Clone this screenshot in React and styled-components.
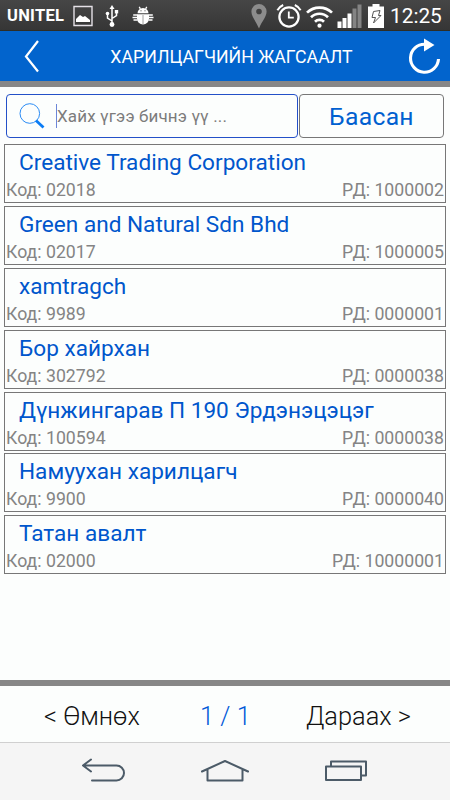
import React from 'react'
import styled, { createGlobalStyle } from 'styled-components'

const customers = [
  { name: 'Creative Trading Corporation', code: '02018', rd: '1000002' },
  { name: 'Green and Natural Sdn Bhd', code: '02017', rd: '1000005' },
  { name: 'xamtragch', code: '9989', rd: '0000001' },
  { name: 'Бор хайрхан', code: '302792', rd: '0000038' },
  { name: 'Дүнжингарав П 190 Эрдэнэцэцэг', code: '100594', rd: '0000038' },
  { name: 'Намуухан харилцагч', code: '9900', rd: '0000040' },
  { name: 'Татан авалт', code: '02000', rd: '10000001' },
]

const StatusBar = () => (
  <Status>
    <Carrier>UNITEL</Carrier>
    <Icon $w={20} $left={8} viewBox='0 0 20 22'>
      <path d='M1 1.5h18v19H1z' fill='none' stroke='#e4e0e6' strokeWidth='1.4' />
      <path d='M3 17v-3l4-4 3 2 2-1 5 4v2z' fill='#fff' />
    </Icon>
    <Icon $w={14} $left={12} viewBox='0 0 14 22'>
      <path
        d='M7 3v16M7 16l-4.5-3V9M7 13.5l4.5-3V7'
        fill='none'
        stroke='#fff'
        strokeWidth='1.5'
      />
      <path d='M7 0l2.5 4h-5z' fill='#fff' />
      <circle cx='7' cy='19.5' r='2.4' fill='#fff' />
      <circle cx='2.5' cy='8.5' r='1.8' fill='#fff' />
      <path d='M9.8 5h3.4v3.4H9.8z' fill='#fff' />
    </Icon>
    <Icon $w={22} $left={13} viewBox='0 0 22 22'>
      <path d='M5.5 8.2a5.5 5.2 0 0 1 11 0z' fill='#fff' />
      <path d='M5 9.2h12v4.3a6 6 0 0 1-12 0z' fill='#fff' />
      <path
        d='M7.2 1.8l1.2 2M14.8 1.8l-1.2 2M5.5 10H1.2M5 12.5H.5M5.5 15H1.5M16.5 10h4.3M17 12.5h4.5M16.5 15h4'
        stroke='#fff'
        strokeWidth='1.3'
      />
      <path d='M11 10v9' stroke='#888' strokeWidth='.8' />
      <path d='M8.5 5.8h1M12.5 5.8h1' stroke='#444' />
    </Icon>
    <Spacer />
    <Icon $w={16} $h={26} viewBox='0 0 16 26'>
      <path
        d='M8 1a7.6 7.6 0 0 0-7.6 7.6C.4 14 5 18 8 25.5 11 18 15.6 14 15.6 8.6A7.6 7.6 0 0 0 8 1zm0 4.7a2.8 2.8 0 1 1 0 5.6 2.8 2.8 0 0 1 0-5.6z'
        fill='#8c8c8c'
        fillRule='evenodd'
      />
    </Icon>
    <Icon $w={26} $h={26} $left={9} viewBox='0 0 26 26'>
      <circle cx='13' cy='14' r='9.6' fill='none' stroke='#fff' strokeWidth='2.3' />
      <path d='M12.8 8.5v6.2h5' fill='none' stroke='#fff' strokeWidth='1.8' />
      <path
        d='M1.4 7.2a12 12 0 0 1 5.8-5.2M24.6 7.2A12 12 0 0 0 18.8 2'
        fill='none'
        stroke='#fff'
        strokeWidth='2'
      />
    </Icon>
    <Icon $w={27} $h={26} $left={4} viewBox='0 0 27 26'>
      <path
        d='M1 9.6a18 18 0 0 1 25 0M5 14.3a12 12 0 0 1 17 0M9 18.8a6.4 6.4 0 0 1 9 0'
        fill='none'
        stroke='#fff'
        strokeWidth='2.7'
      />
      <circle cx='13.5' cy='22.7' r='2.1' fill='#fff' />
    </Icon>
    <Icon $w={25} $h={26} $left={4} viewBox='0 0 25 26'>
      <path d='M.5 18.5h4V25h-4zM5.5 15h4v10h-4zM10.5 10.5h4V25h-4z' fill='#fff' />
      <path d='M15.5 5.5h4V25h-4zM20.5 1.5h4V25h-4z' fill='#848484' />
    </Icon>
    <Icon $w={16} $h={26} $left={6} viewBox='0 0 16 26'>
      <path d='M4.5 1h7v2.5H16V25H0V3.5h4.5z' fill='#fff' />
      <path d='M5.5 8.5l6.5-1-1.5 5h2.5L5.5 20l2-5.5H4z' fill='none' stroke='#555' />
    </Icon>
    <Clock>12:25</Clock>
  </Status>
)

const Header = () => (
  <TitleBar>
    <IconButton aria-label='back'>
      <svg width='16' height='34' viewBox='0 0 16 34'>
        <path d='M14 2L2 17.5l12 15' fill='none' stroke='#fff' strokeWidth='2.2' />
      </svg>
    </IconButton>
    <h1>ХАРИЛЦАГЧИЙН ЖАГСААЛТ</h1>
    <IconButton aria-label='refresh'>
      <svg width='34' height='38' viewBox='0 0 34 38'>
        <path
          d='M17 7.2A14 14 0 1 0 30.5 22'
          fill='none'
          stroke='#fff'
          strokeWidth='3.1'
        />
        <path d='M16 1.5L26.5 8 16 14.5z' fill='#fff' />
      </svg>
    </IconButton>
  </TitleBar>
)

const Search = () => (
  <SearchRow>
    <SearchBox>
      <svg width='26' height='26' viewBox='0 0 26 26'>
        <circle cx='10.8' cy='10.5' r='9.8' fill='none' stroke='#2b8cf5' />
        <path d='M17 17.5l7.5 7' stroke='#0a7cf5' strokeWidth='2.8' />
      </svg>
      <Caret />
      <span>Хайх үгээ бичнэ үү ...</span>
    </SearchBox>
    <DayButton>Баасан</DayButton>
  </SearchRow>
)

const App = () => (
  <Screen>
    <GlobalStyle />
    <StatusBar />
    <Header />
    <Divider />
    <Search />
    <List>
      {customers.map((c) => (
        <Card key={c.name}>
          <Name>{c.name}</Name>
          <Meta>
            <span>Код: {c.code}</span>
            <span>РД: {c.rd}</span>
          </Meta>
        </Card>
      ))}
    </List>
    <Divider />
    <Pager>
      <PageLink>&lt; Өмнөх</PageLink>
      <PageLink $active>1 / 1</PageLink>
      <PageLink>Дараах &gt;</PageLink>
    </Pager>
    <NavBar>
      <svg width='46' height='26' viewBox='0 0 46 26'>
        <path d='M11 2.5L3 8.5l8 6M3.5 8.5h33a7.5 7.5 0 0 1 0 15H12' />
      </svg>
      <svg width='50' height='26' viewBox='0 0 50 26'>
        <path d='M2 14.5L25 4l23 10.5M7.5 13v10.5h35V13' />
      </svg>
      <svg width='46' height='26' viewBox='0 0 46 26'>
        <path d='M3 9.5h35v13.5H3zM8 9V4.5h35v14h-4.5' />
      </svg>
    </NavBar>
  </Screen>
)

export default App

const GlobalStyle = createGlobalStyle`
  body {
    margin: 0;
    font-family: Roboto, 'Noto Sans', sans-serif;
  }
`

const Screen = styled.div`
  display: flex;
  flex-direction: column;
  width: 450px;
  height: 800px;
  overflow: hidden;
  background: #fcfefd;
`

const Status = styled.div`
  display: flex;
  align-items: center;
  flex: none;
  height: 31px;
  box-sizing: border-box;
  padding: 0 9px 0 7px;
  color: #fff;
  background: linear-gradient(#464646, #363636 95%, #292a20);
`

const Carrier = styled.span`
  width: 58px;
  font-size: 16.5px;
  font-weight: 700;
  letter-spacing: 0.3px;
  white-space: nowrap;
`

const Icon = styled.svg`
  flex: none;
  width: ${(p) => p.$w}px;
  height: ${(p) => p.$h || 22}px;
  margin-left: ${(p) => p.$left || 0}px;
`

const Spacer = styled.div`
  flex: 1;
`

const Clock = styled.span`
  width: 51px;
  margin-left: 6px;
  font-size: 20.8px;
  line-height: 32px;
  white-space: nowrap;
`

const TitleBar = styled.header`
  display: flex;
  align-items: center;
  justify-content: space-between;
  flex: none;
  height: 50px;
  box-sizing: border-box;
  padding: 0 8px 0 24px;
  color: #fff;
  background: #0264cd;

  h1 {
    margin: 2px 0 0 15px;
    font-size: 17.7px;
    font-weight: 400;
    line-height: 24px;
  }
`

const IconButton = styled.button`
  display: flex;
  padding: 0;
  border: 0;
  background: none;
`

const Divider = styled.div`
  flex: 0 0 6px;
  background: #878787;
`

const SearchRow = styled.div`
  display: flex;
  gap: 1px;
  height: 44px;
  padding: 7px 6px 6px;
`

const SearchBox = styled.div`
  display: flex;
  align-items: center;
  box-sizing: border-box;
  width: 292px;
  padding-left: 12px;
  border: 1px solid #2450c8;
  border-radius: 4px;
  color: #7c7c7c;
  font-size: 17px;
  letter-spacing: 0.15px;
`

const Caret = styled.i`
  width: 1px;
  height: 24px;
  margin-left: 11px;
  background: #6c86d8;
`

const DayButton = styled.button`
  flex: 1;
  padding: 1px 0 0;
  border: 1px solid #777;
  border-radius: 4px;
  color: #0060d0;
  font: 400 24.7px Roboto, sans-serif;
  letter-spacing: 0.3px;
  background: none;
`

const List = styled.div`
  display: flex;
  flex: 1;
  flex-direction: column;
  gap: 2.9px;
  padding: 0 4px;
`

const Card = styled.div`
  box-sizing: border-box;
  height: 59px;
  border: 1px solid #777;
`

const Name = styled.div`
  padding-left: 14px;
  color: #0056cc;
  font-size: 22.6px;
  line-height: 36px;
`

const Meta = styled.div`
  display: flex;
  justify-content: space-between;
  padding: 0 1px;
  color: #848484;
  font-size: 17.7px;
  line-height: 18px;
`

const Pager = styled.div`
  display: flex;
  align-items: center;
  justify-content: space-between;
  flex: none;
  height: 56px;
  box-sizing: border-box;
  padding: 3px 39px 0 44px;
`

const PageLink = styled.span`
  margin-left: ${(p) => (p.$active ? 5 : 0)}px;
  color: ${(p) => (p.$active ? '#0058d8' : '#111')};
  font-size: 25.4px;
  font-weight: 300;
  white-space: nowrap;
`

const NavBar = styled.nav`
  display: flex;
  justify-content: space-between;
  flex: none;
  height: 58px;
  box-sizing: border-box;
  padding: 14px 81px 0 80px;
  border-top: 1px solid #d0d0d0;
  background: #f5f5f5;

  path {
    fill: none;
    stroke: #4c5b68;
    stroke-width: 2;
    stroke-linejoin: round;
    stroke-linecap: round;
  }
`
